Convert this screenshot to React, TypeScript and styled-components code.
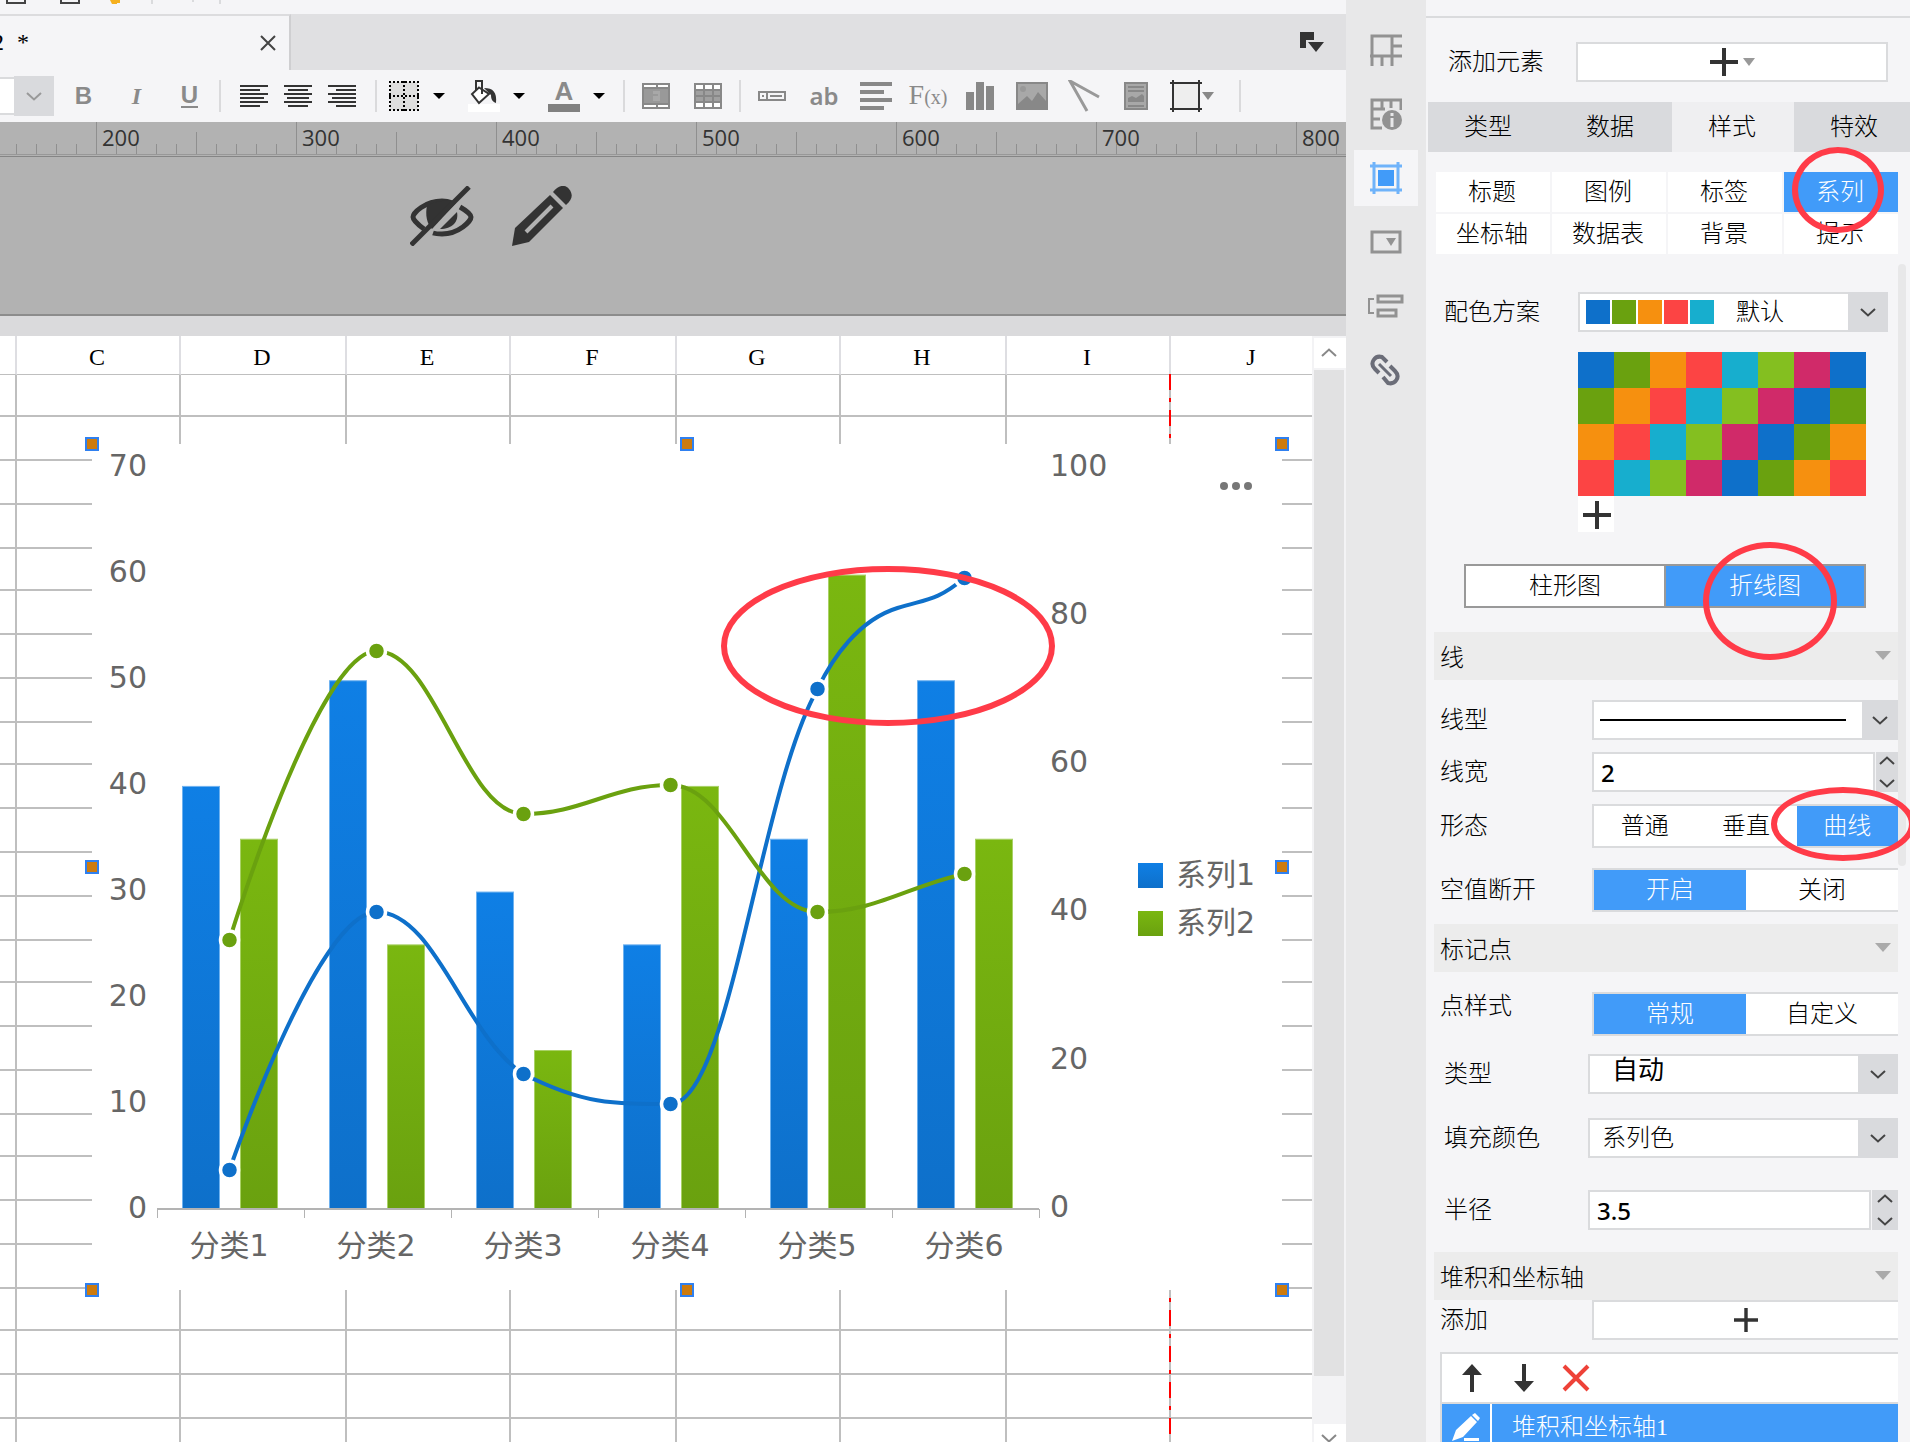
import React from "react";
import styled, { createGlobalStyle } from "styled-components";

const song = '"Liberation Serif", "Noto Sans CJK SC", serif';
const sans = '"DejaVu Sans", "Noto Sans CJK SC", sans-serif';
const line = "#dadbdd";
const blue = "#419bf9";
const mark = "#ff3b48";
const ink = "#333333";

const GlobalStyle = createGlobalStyle`
  * { box-sizing: border-box; }
  body { margin: 0; background: #f5f5f7; font-family: ${song}; font-size: 24px; font-weight: 300; color: #000; }
  button, input, select { font: inherit; color: inherit; margin: 0; padding: 0; border: 0; border-radius: 0; background: none; }
  svg { display: block; flex: none; }
`;

const Shell = styled.div`
  display: grid;
  grid-template-columns: minmax(0, 1fr) 80px 484px;
  height: 100vh;
  overflow: hidden;
`;

/* ---------- editor ---------- */

const Editor = styled.main`
  display: flex;
  flex-direction: column;
  min-width: 0;
  min-height: 0;
`;

const QuickBar = styled.div`
  height: 14px;
  overflow: hidden;
`;

const TabBar = styled.div`
  display: flex;
  align-items: center;
  justify-content: space-between;
  height: 56px;
  padding-right: 22px;
  background: #e0e0e2;
`;

const FileTab = styled.div`
  display: flex;
  align-items: center;
  justify-content: space-between;
  width: 291px;
  height: 56px;
  padding-right: 13px;
  border-top: 2px solid #dcdcde;
  border-right: 2px solid #cfcfd1;
  background: #f5f5f7;
`;

const TabName = styled.span`
  display: flex;
  gap: 13px;
  margin-left: -8px;
  padding-bottom: 2px;
`;

const PlainButton = styled.button`
  display: flex;
  align-items: center;
  justify-content: center;
`;

const Toolbar = styled.div`
  display: flex;
  align-items: center;
  height: 52px;
  overflow: hidden;
`;

const SizeBox = styled.input`
  flex: none;
  width: 14px;
  height: 38px;
  border: solid ${line};
  border-width: 2px 0;
  background: #fff;
`;

const Drop = styled.span<{ $w: number }>`
  display: flex;
  flex: none;
  align-items: center;
  justify-content: center;
  width: ${(p) => p.$w}px;
  height: 40px;
  background: #d9dadd;
`;

const Group = styled.div<{ $left: number; $right: number; $gap?: number }>`
  display: flex;
  flex: none;
  align-items: center;
  gap: ${(p) => p.$gap ?? 0}px;
  height: 32px;
  padding: 0 ${(p) => p.$right}px 0 ${(p) => p.$left}px;
  border-right: 2px solid #dadadc;
`;

const Tool = styled.button<{ $w: number; $gap?: number }>`
  display: flex;
  align-items: center;
  justify-content: center;
  gap: ${(p) => p.$gap ?? 0}px;
  width: ${(p) => p.$w}px;
  height: 32px;
  color: #8a8a8a;
  line-height: 24px;
  white-space: nowrap;
`;

const Letter = styled.span<{ $kind: "bold" | "italic" | "under" | "word" | "fn" }>`
  font-family: ${(p) => (p.$kind === "italic" || p.$kind === "fn" ? '"Liberation Serif", serif' : p.$kind === "word" ? '"Noto Sans", sans-serif' : '"Liberation Sans", sans-serif')};
  font-size: ${(p) => (p.$kind === "fn" ? 28 : 24)}px;
  font-weight: ${(p) => (p.$kind === "fn" ? 400 : p.$kind === "word" ? 600 : 700)};
  font-style: ${(p) => (p.$kind === "italic" ? "italic" : "normal")};
  border-bottom: ${(p) => (p.$kind === "under" ? "2px solid #8a8a8a" : "0")};
  line-height: 22px;
  small { font-size: 20px; }
`;

const ColorTool = styled.span<{ $bar: string }>`
  display: flex;
  justify-content: center;
  width: 32px;
  height: 32px;
  border-bottom: 8px solid ${(p) => p.$bar};
  font: 700 26px/22px "Liberation Sans", sans-serif;
`;

const Ruler = styled.div`
  height: 35px;
  overflow: hidden;
  border-bottom: 1px solid #858585;
  background: #b2b2b2;
`;

const RulerTrack = styled.div`
  display: flex;
  height: 33px;
  border-bottom: 1px solid #989898;
`;

const RulerUnit = styled.span<{ $lead?: boolean }>`
  flex: none;
  width: ${(p) => (p.$lead ? 96 : 200)}px;
  padding: 2px 0 0 5px;
  border-left: ${(p) => (p.$lead ? 0 : 1)}px solid #8f8f8f;
  background:
    linear-gradient(#8f8f8f, #8f8f8f) ${(p) => (p.$lead ? -4 : 99)}px 10px / 1px 24px no-repeat,
    repeating-linear-gradient(to left, transparent 0 19px, #8f8f8f 19px 20px) right 22px / 199px 12px no-repeat;
  color: ${ink};
  font: 500 22px/26px "Open Sans", sans-serif;
`;

const HeaderBand = styled.div`
  display: flex;
  gap: 38px;
  height: 159px;
  padding: 29px 0 0 410px;
  border-bottom: 2px solid #8c8c8c;
  background: #b2b2b2;
`;

const Divider = styled.div`
  height: 20px;
  background: #dadadc;
`;

const SheetArea = styled.div`
  display: flex;
  flex: 1;
  min-height: 0;
`;

const SheetView = styled.div`
  position: relative;
  flex: 1;
  min-width: 0;
  overflow: hidden;
  background: #fff;
`;

const Sheet = styled.table`
  width: 1335px;
  table-layout: fixed;
  border-collapse: separate;
  border-spacing: 0;
`;

const ColHead = styled.th`
  height: 39px;
  padding: 4px 2px 0 0;
  border-right: 2px solid #dedee2;
  border-bottom: 1px solid #bfbfbf;
  font: 400 24px/28px ${song};
`;

const Cell = styled.td<{ $h: number }>`
  height: ${(p) => p.$h}px;
  padding: 0;
  border-right: 2px solid #bfbfbf;
  border-bottom: 2px solid #bfbfbf;
`;

const PageBreak = styled.div`
  position: absolute;
  top: 38px;
  bottom: 0;
  left: 1169px;
  width: 2px;
  background: repeating-linear-gradient(#f00 0 16px, transparent 16px 24px, #f00 24px 28px, transparent 28px 36px);
`;

const ChartFrame = styled.div`
  position: absolute;
  top: 108px;
  left: 92px;
  background: #fff;
`;

const Handle = styled.span<{ $x: number; $y: number }>`
  position: absolute;
  left: ${(p) => p.$x}%;
  top: ${(p) => p.$y}%;
  width: 14px;
  height: 14px;
  margin: -7px;
  border: 2px solid #2f80f0;
  background: #cd7b0e;
`;

const ScrollRail = styled.div`
  display: flex;
  flex-direction: column;
  gap: 2px;
  width: 34px;
  padding: 2px 0 0 2px;
  background: #f3f3f5;
`;

const ScrollButton = styled.button<{ $h: number }>`
  display: flex;
  align-items: flex-start;
  justify-content: center;
  flex: none;
  height: ${(p) => p.$h}px;
  padding: 10px 2px 0 0;
  background: #fff;
`;

const ScrollThumb = styled.div`
  flex: 1;
  margin: 0 2px 46px 0;
  background: #e1e1e2;
`;

/* ---------- side rail ---------- */

const SideRail = styled.nav`
  display: flex;
  flex-direction: column;
  align-items: center;
  gap: 8px;
  padding-top: 22px;
  background: #e8e8e9;
`;

const RailButton = styled.button<{ $active?: boolean }>`
  display: flex;
  align-items: center;
  justify-content: center;
  width: 64px;
  height: 56px;
  background: ${(p) => (p.$active ? "#f5f5f7" : "transparent")};
`;

/* ---------- property panel ---------- */

const Panel = styled.aside`
  display: flex;
  flex-direction: column;
  min-height: 0;
  padding-top: 16px;
`;

const AddRow = styled.div`
  display: flex;
  align-items: center;
  justify-content: space-between;
  height: 86px;
  padding: 3px 22px 0;
  border-top: 2px solid ${line};
  label { padding-bottom: 4px; }
`;

const AddButton = styled.button`
  display: flex;
  align-items: center;
  justify-content: center;
  gap: 5px;
  width: 312px;
  height: 40px;
  border: 2px solid ${line};
  background: #fff;
`;

const Tabs = styled.div`
  display: flex;
  margin-left: 2px;
  overflow: hidden;
`;

const Tab = styled.button<{ $active?: boolean }>`
  flex: none;
  width: 122px;
  height: 50px;
  padding: 0 2px 6px 0;
  background: ${(p) => (p.$active ? "#efeff1" : "#d9dadd")};
`;

const SubTabs = styled.div`
  display: grid;
  grid-template-columns: repeat(4, 1fr);
  gap: 2px;
  margin: 20px 12px 10px 10px;
`;

const SubTab = styled.button<{ $active?: boolean }>`
  position: relative;
  height: 40px;
  padding: 0 2px 5px 0;
  background: ${(p) => (p.$active ? blue : "#fff")};
  color: ${(p) => (p.$active ? "#fff" : "#000")};
`;

const Ring = styled.span<{ $w: number; $h: number; $x: number; $y: number }>`
  position: absolute;
  z-index: 2;
  left: ${(p) => p.$x}px;
  top: ${(p) => p.$y}px;
  width: ${(p) => p.$w}px;
  height: ${(p) => p.$h}px;
  border: 6px solid ${mark};
  border-radius: 50%;
  pointer-events: none;
`;

const Scroller = styled.div`
  display: flex;
  flex: 1;
  min-height: 0;
`;

const Form = styled.div`
  flex: 1;
  min-width: 0;
  padding: 28px 0 0 8px;
`;

const PanelThumb = styled.div`
  flex: none;
  width: 8px;
  height: 602px;
  margin-right: 4px;
  border-radius: 4px;
  background: #e8e8e9;
`;

const Field = styled.div<{ $inset?: boolean; $after: number; $top?: boolean }>`
  display: flex;
  align-items: ${(p) => (p.$top ? "flex-start" : "center")};
  margin-bottom: ${(p) => p.$after}px;
  padding-left: ${(p) => (p.$inset ? 10 : 6)}px;
  line-height: 28px;
  & > :first-child { flex: none; width: ${(p) => (p.$inset ? 144 : 152)}px; }
`;

const SchemeField = styled(Field)`
  padding-right: 10px;
  & > :first-child { width: 134px; }
`;

const Combo = styled.div`
  display: flex;
  flex: 1;
  height: 40px;
  background: #fff;
  box-shadow: inset 0 0 0 2px ${line};
`;

const Select = styled.select<{ $pad: number; $big?: boolean; $rule?: boolean }>`
  appearance: none;
  flex: 1;
  min-width: 0;
  padding-left: ${(p) => p.$pad}px;
  padding-bottom: ${(p) => (p.$big ? 8 : 0)}px;
  font-family: ${(p) => (p.$big ? sans : song)};
  font-size: ${(p) => (p.$big ? 26 : 24)}px;
  font-weight: ${(p) => (p.$big ? 400 : 300)};
  background: ${(p) => (p.$rule ? "linear-gradient(#000, #000) 8px 19px / calc(100% - 24px) 2px no-repeat" : "none")};
`;

const Swatches = styled.span`
  display: flex;
  gap: 2px;
  padding: 8px 0 0 8px;
`;

const Swatch = styled.span<{ $c: string; $s: number }>`
  width: ${(p) => p.$s}px;
  height: ${(p) => p.$s}px;
  background: ${(p) => p.$c};
`;

const Palette = styled.div`
  display: grid;
  grid-template-columns: repeat(8, 36px);
  margin: 0 0 32px 144px;
`;

const PaletteAdd = styled.button`
  display: flex;
  align-items: center;
  justify-content: center;
  width: 36px;
  height: 36px;
  padding: 2px 0 0 2px;
  background: #fff;
`;

const KindSwitch = styled.div`
  display: grid;
  grid-template-columns: 1fr 1fr;
  gap: 2px;
  height: 44px;
  margin: 0 32px 24px 30px;
  padding: 2px;
  background: #999;
  button { padding-bottom: 5px; }
`;

const Section = styled.button<{ $after: number }>`
  display: flex;
  align-items: center;
  justify-content: space-between;
  width: 100%;
  height: 48px;
  margin-bottom: ${(p) => p.$after}px;
  padding: 0 7px 1px 6px;
  background: #ececec;
  text-align: left;
`;

const Segments = styled.div`
  display: flex;
  flex: 1;
  height: 44px;
  border: solid ${line};
  border-width: 2px 0 2px 2px;
  background: #fff;
`;

const Segment = styled.button<{ $active?: boolean }>`
  position: relative;
  flex: 1;
  background: ${(p) => (p.$active ? blue : "#fff")};
  color: ${(p) => (p.$active ? "#fff" : "#000")};
`;

const NumberBox = styled.input`
  flex: 1;
  min-width: 0;
  height: 40px;
  padding-left: 7px;
  border: 2px solid ${line};
  background: #fff;
  font: 500 24px/28px "Noto Sans", sans-serif;
`;

const Stepper = styled.span<{ $w: number }>`
  display: flex;
  flex-direction: column;
  align-items: center;
  justify-content: space-between;
  width: ${(p) => p.$w}px;
  height: 40px;
  margin-left: 1px;
  padding: 4px 0;
  background: #d9dadd;
`;

const WideAdd = styled.button`
  display: flex;
  align-items: center;
  justify-content: center;
  flex: 1;
  height: 40px;
  border: solid ${line};
  border-width: 2px 0 2px 2px;
  background: #fff;
`;

const StackList = styled.div`
  margin-left: 6px;
  border: solid ${line};
  border-width: 2px 0 0 2px;
  background: #fff;
`;

const StackTools = styled.div`
  display: flex;
  align-items: center;
  gap: 24px;
  height: 50px;
  padding-left: 16px;
  border-bottom: 2px solid ${line};
`;

const StackRow = styled.div`
  display: flex;
  gap: 2px;
  height: 46px;
`;

const StackEdit = styled.button`
  display: flex;
  align-items: center;
  justify-content: center;
  width: 48px;
  background: ${blue};
`;

const StackName = styled.span`
  flex: 1;
  padding-left: 20px;
  background: ${blue};
  color: #fff;
  line-height: 46px;
`;

/* ---------- icons ---------- */

const Chevron = ({ up, color = "#444" }: { up?: boolean; color?: string }) => (
  <svg width="16" height="9" viewBox="0 0 16 9" fill="none" stroke={color} strokeWidth="2">
    <path d={up ? "M1 8 8 1.5 15 8" : "M1 1 8 7.5 15 1"} />
  </svg>
);

const Caret = ({ w = 12, h = 6, color = "#000" }: { w?: number; h?: number; color?: string }) => (
  <svg width={w} height={h} viewBox="0 0 12 6" preserveAspectRatio="none" fill={color}><path d="M0 0h12L6 6z" /></svg>
);

const Plus = ({ size = 28 }: { size?: number }) => (
  <svg width={size} height={size} viewBox="0 0 28 28" stroke={ink} strokeWidth="4"><path d="M14 0v28M0 14h28" /></svg>
);

const AlignIcon = ({ rows }: { rows: number[][] }) => (
  <svg width="28" height="22" viewBox="0 0 28 22" stroke={ink} strokeWidth="2">
    {rows.map(([a, b], i) => <path key={i} d={`M${a} ${1 + i * 4}H${b}`} />)}
  </svg>
);

const BorderIcon = () => (
  <svg width="32" height="32" viewBox="0 0 32 32">
    <path d="M2 2h28v28H2z" fill="#dedede" />
    <path d="M2 1v30M16 1v30M30 1v30M1 2h30M1 16h30M1 30h30" stroke="#000" strokeWidth="2" strokeDasharray="2 2" />
  </svg>
);

const BucketIcon = () => (
  <svg width="32" height="32" viewBox="0 0 32 32" fill="none" stroke={ink} strokeWidth="2">
    <path d="M0 24h32v8H0z" fill="#fff" stroke="none" />
    <path d="M11 7.500 21 14 11 23 4 14z" fill="#fff" />
    <path d="M8 10V1h6v13" />
    <path d="M16 8c9 0 13 4 12 15-3-1-5-3-5-8z" fill={ink} stroke="none" />
  </svg>
);

const CellsIcon = ({ dense }: { dense?: boolean }) => (
  <svg width="28" height="26" viewBox="0 0 28 26">
    <path d="M0 0h28v26H0z" fill="#888" />
    {dense ? (
      <>
        <path d="M2 2h7v4H2zM11 2h7v4h-7zM20 2h6v4h-6zM2 20h7v4H2zM11 20h7v4h-7zM20 20h6v4h-6z" fill="#fff" />
        <path d="M2 8h7v4H2zM11 8h7v4h-7zM20 8h6v4h-6zM2 14h7v4H2zM11 14h7v4h-7zM20 14h6v4h-6z" fill="#a0a0a0" />
      </>
    ) : (
      <>
        <path d="M2 2h12v2H2zM16 2h10v2H16zM2 22h12v2H2zM16 22h10v2H16z" fill="#fff" />
        <path d="M2 6h24v14H2z" fill="#999" />
        <path d="M11 8h7v10h-7v-5h5v-2h-5z" fill="#a8a8a8" />
      </>
    )}
  </svg>
);

const FieldIcon = () => (
  <svg width="28" height="10" viewBox="0 0 28 10" fill="none" stroke="#888" strokeWidth="2"><path d="M1 1h26v8H1zM9 1v8M4 5h2M12 5h12" /></svg>
);
const ParagraphIcon = () => (
  <svg width="32" height="28" viewBox="0 0 32 28" stroke="#888" strokeWidth="4"><path d="M0 2h32M0 10h24M0 18h32M0 26h24" /></svg>
);
const BarsIcon = () => (
  <svg width="28" height="28" viewBox="0 0 28 28" fill="#888"><path d="M0 10h8v18H0zM10 0h8v28h-8zM20 4h8v24h-8z" /></svg>
);
const ImageIcon = () => (
  <svg width="32" height="28" viewBox="0 0 32 28">
    <path d="M1 1h30v26H1z" fill="#a8a8a8" stroke="#888" strokeWidth="2" />
    <path d="M2 22 11 14l5 5 6-9 8 9v8H2z" fill="#888" /><circle cx="7" cy="7" r="3" fill="#999" />
  </svg>
);
const SlantIcon = () => (
  <svg width="32" height="32" viewBox="0 0 32 32" fill="none" stroke="#999" strokeWidth="3"><path d="M19 31 2 1l29 16" /></svg>
);
const ReportIcon = () => (
  <svg width="24" height="28" viewBox="0 0 24 28">
    <path d="M1 1h22v26H1z" fill="#a8a8a8" stroke="#888" strokeWidth="2" />
    <path d="M4 5h16M4 9h16M4 24h16" stroke="#888" strokeWidth="2" /><path d="M4 20v-4l4-2 4 2 6-4 2 2v6z" fill="#888" />
  </svg>
);
const FrameIcon = () => (
  <svg width="32" height="32" viewBox="0 0 32 32" stroke={ink} strokeWidth="2"><path d="M3 3h26v26H3z" fill="#eee" stroke="none" /><path d="M0 3h32M0 29h32M3 0v32M29 0v32" /></svg>
);

const EyeOffIcon = () => (
  <svg width="64" height="60" viewBox="0 0 64 60" fill="none" stroke={ink} strokeWidth="5">
    <path d="M14 43C7 38 3 33 3 31c0-4 12-16 29-16 4 0 8 1 11 2" />
    <path d="M50 21c7 4 11 8 11 10 0 4-12 17-29 17-4 0-6 0-9-1" />
    <path d="M17 20c3-4 24-8 29-3L22 43c-5-5-7-14-5-23z" fill={ink} stroke="none" />
    <path d="M47 26c2 10-5 17-17 17z" fill={ink} stroke="none" />
    <path d="M1 59 59 1" strokeWidth="5" />
  </svg>
);
const PencilIcon = () => (
  <svg width="60" height="60" viewBox="0 0 60 60">
    <path d="M0 60 3 42 38 9 51 22 17 56z" fill={ink} />
    <path d="M14 46 40 20" stroke="#b2b2b2" strokeWidth="4" />
    <path d="M41 6C46-1 53-2 57 3s4 10-3 16z" fill={ink} />
  </svg>
);

const FlagIcon = () => (
  <svg width="24" height="20" viewBox="0 0 24 20" fill={ink}><path d="M0 0h14v8H6v8H0zM8 10h16l-8 10z" /></svg>
);

const CellAttrIcon = () => (
  <svg width="32" height="32" viewBox="0 0 32 32" fill="none" stroke="#929292" strokeWidth="3"><path d="M32 2H2v30M22 2v30M0 22h32M22 12h10M12 22v10" /></svg>
);
const CellInfoIcon = () => (
  <svg width="32" height="32" viewBox="0 0 32 32" fill="none" stroke="#929292" strokeWidth="3">
    <path d="M31 12V2H2v28h10M2 11h13M12 2v10M21 2v8M2 21h8" />
    <circle cx="22" cy="22" r="10" fill="#929292" stroke="none" /><path d="M22 15v3M22 20v9" stroke="#e8e8e9" />
  </svg>
);
const WidgetIcon = () => (
  <svg width="32" height="32" viewBox="0 0 32 32" fill="none" stroke="#6fb3fa" strokeWidth="3">
    <path d="M0 4h32M0 28h32M4 0v32M28 0v32" /><path d="M8 8h16v16H8z" fill={blue} stroke="none" />
  </svg>
);
const ComboIcon = () => (
  <svg width="32" height="24" viewBox="0 0 32 24" fill="none" stroke="#929292" strokeWidth="3"><path d="M2 2h28v20H2z" /><path d="M16 8h10l-5 8z" fill="#929292" stroke="none" /></svg>
);
const TreeIcon = () => (
  <svg width="36" height="24" viewBox="0 0 36 24" fill="none" stroke="#929292" strokeWidth="3"><path d="M10 2h24v6H10zM10 16h18v6H10z" /><path d="M6 5H1v14h5" strokeWidth="2" /></svg>
);
const LinkIcon = () => (
  <svg width="32" height="32" viewBox="0 0 32 32" fill="none" stroke="#6b6d78" strokeWidth="4">
    <path d="M9 19 5 15C-1 9 5 1 12 3l5 5" /><path d="M9 10 21 22" strokeWidth="3" /><path d="M20 12l5 5c6 6 0 14-7 12l-5-6" />
  </svg>
);

/* ---------- chart ---------- */

const bars1 = [40, 50, 30, 25, 35, 50];
const bars2 = [35, 25, 15, 40, 60, 35];
const dots1 = [1170, 912, 1074, 1104, 689, 578];
const dots2 = [940, 651, 814, 785, 912, 874];
const base = 1209;
const step = 147;

const Chart = () => {
  const x = (i: number) => 229 + i * step;
  const bar = (v: number, i: number, off: number, fill: string, edge: string) => {
    const top = base - v * 10.565;
    return <rect key={`${off}-${i}`} x={182.5 + off + i * step} y={top} width="37" height={base - top} fill={`url(#${fill})`} stroke={edge} />;
  };
  return (
    <svg width="1190" height="846" viewBox="92 444 1190 846" fontFamily={sans} fontSize="30" fontWeight="400" fill="#666">
      <defs>
        <linearGradient id="g1" x1="0" y1="0" x2="0" y2="1"><stop offset="0" stopColor="#0f7fe5" /><stop offset="1" stopColor="#0e70ca" /></linearGradient>
        <linearGradient id="g2" x1="0" y1="0" x2="0" y2="1"><stop offset="0" stopColor="#7ab710" /><stop offset="1" stopColor="#6aa10f" /></linearGradient>
      </defs>
      {[70, 60, 50, 40, 30, 20, 10, 0].map((v, i) => <text key={v} x="147" y={476 + i * 106} textAnchor="end">{v}</text>)}
      {[100, 80, 60, 40, 20, 0].map((v, i) => <text key={v} x="1050" y={Math.floor(476 + i * 148.3)}>{v}</text>)}
      {bars1.map((v, i) => bar(v, i, 0, "g1", "#6fb2ef"))}
      {bars2.map((v, i) => bar(v, i, 58, "g2", "#a9d166"))}
      <path d="M157 1209H1039" stroke="#b3b3b3" strokeWidth="2" />
      {[0, 1, 2, 3, 4, 5, 6].map((i) => <path key={i} d={`M${157.5 + i * step} 1209v9`} stroke="#b3b3b3" />)}
      {[1, 2, 3, 4, 5, 6].map((n, i) => <text key={n} x={x(i)} y="1256" textAnchor="middle">{`分类${n}`}</text>)}
      <g transform="translate(0.500 0)">
        <g fill="none" strokeWidth="4">
          <path stroke="#0e70ca" d="M229 1170C229 1170 317 912 376 912 435 912 464 1036 523 1074 582 1104 611 1104 670 1104 729 1104 758 794 817 689 832 658 858 620 897 608 925 599 935 602 964 578" />
          <path stroke="#6aa10f" d="M229 940C229 940 317 651 376 651 435 651 464 814 523 814 582 814 611 785 670 785 729 785 758 912 817 912 876 912 910 885 964 874" />
        </g>
        {dots1.map((y, i) => <circle key={i} cx={x(i)} cy={y} r="9" fill="#0e70ca" stroke="#fff" strokeWidth="3.500" />)}
        {dots2.map((y, i) => <circle key={i} cx={x(i)} cy={y} r="9" fill="#6aa10f" stroke="#fff" strokeWidth="3.500" />)}
      </g>
      <rect x="1138" y="863" width="25" height="25" fill="url(#g1)" />
      <text x="1176" y="885">系列1</text>
      <rect x="1138" y="911" width="25" height="25" fill="url(#g2)" />
      <text x="1176" y="933">系列2</text>
      {[1224, 1236, 1248].map((cx) => <circle key={cx} cx={cx} cy="486" r="4" fill="#777" />)}
      <ellipse cx="888" cy="646" rx="164" ry="77" fill="none" stroke={mark} strokeWidth="6" />
    </svg>
  );
};

const colors = ["#0e70ca", "#6aa10f", "#f6900f", "#fc4444", "#17aece", "#84bf20", "#d02a69"];
const rowHeights = [42, 44, 44, 44, 42, 44, 44, 44, 42, 44, 44, 44, 44, 42, 44, 44, 44, 42, 44, 44, 44, 42, 44, 44, 44];
const cols = ["", "C", "D", "E", "F", "G", "H", "I", "J"];
const colWidths = [17, 164, 166, 164, 166, 164, 166, 164, 164];
const handles = [[0, 0], [50, 0], [100, 0], [0, 50], [100, 50], [0, 100], [50, 100], [100, 100]];

export default function App() {
  return (
    <Shell>
      <GlobalStyle />
      <Editor>
        <QuickBar>
          <svg width="240" height="4" viewBox="0 0 240 4" fill="none">
            <path d="M7 0v3h18V0M61 0v3h18V0" stroke="#444" strokeWidth="2" />
            <path d="M110 0h10v3h-3v1h-5z" fill="#f5b01e" />
            <path d="M152 0v4M193 0v2M220 0v4" stroke={line} strokeWidth="2" />
          </svg>
        </QuickBar>
        <TabBar>
          <FileTab>
            <TabName><span>2</span><span>*</span></TabName>
            <PlainButton aria-label="关闭">
              <svg width="16" height="16" viewBox="0 0 16 16" stroke="#444" strokeWidth="2"><path d="M1 1 15 15M15 1 1 15" /></svg>
            </PlainButton>
          </FileTab>
          <PlainButton aria-label="窗口"><FlagIcon /></PlainButton>
        </TabBar>

        <Toolbar>
          <SizeBox aria-label="字号" />
          <Drop $w={40}><Chevron color="#999" /></Drop>
          <Group $left={3} $right={3}>
            <Tool $w={53}><Letter $kind="bold">B</Letter></Tool>
            <Tool $w={53}><Letter $kind="italic">I</Letter></Tool>
            <Tool $w={53}><Letter $kind="under">U</Letter></Tool>
          </Group>
          <Group $left={11} $right={11}>
            <Tool $w={44} aria-label="左对齐"><AlignIcon rows={[[0, 28], [0, 20], [0, 28], [0, 24], [0, 28], [0, 20]]} /></Tool>
            <Tool $w={44} aria-label="居中"><AlignIcon rows={[[0, 28], [4, 24], [0, 28], [3, 25], [0, 28], [4, 24]]} /></Tool>
            <Tool $w={44} aria-label="右对齐"><AlignIcon rows={[[0, 28], [8, 28], [0, 28], [4, 28], [0, 28], [8, 28]]} /></Tool>
          </Group>
          <Group $left={11} $right={18} $gap={23}>
            <Tool $w={57} $gap={13} aria-label="边框"><BorderIcon /><Caret /></Tool>
            <Tool $w={57} $gap={13} aria-label="填充"><BucketIcon /><Caret /></Tool>
            <Tool $w={57} $gap={13}><ColorTool $bar="#808080">A</ColorTool><Caret /></Tool>
          </Group>
          <Group $left={5} $right={5}>
            <Tool $w={52} aria-label="合并"><CellsIcon /></Tool>
            <Tool $w={52} aria-label="拆分"><CellsIcon dense /></Tool>
          </Group>
          <Group $left={5} $right={17}>
            <Tool $w={52} aria-label="数据列"><FieldIcon /></Tool>
            <Tool $w={52}><Letter $kind="word">ab</Letter></Tool>
            <Tool $w={52} aria-label="富文本"><ParagraphIcon /></Tool>
            <Tool $w={52}><Letter $kind="fn">F<small>(x)</small></Letter></Tool>
            <Tool $w={52} aria-label="图表"><BarsIcon /></Tool>
            <Tool $w={52} aria-label="图片"><ImageIcon /></Tool>
            <Tool $w={52} aria-label="斜线"><SlantIcon /></Tool>
            <Tool $w={52} aria-label="子报表"><ReportIcon /></Tool>
            <Tool $w={60} aria-label="控件"><FrameIcon /><Caret h={8} color="#888" /></Tool>
          </Group>
        </Toolbar>

        <Ruler>
          <RulerTrack>
            <RulerUnit $lead />
            {[200, 300, 400, 500, 600, 700, 800].map((n) => <RulerUnit key={n}>{n}</RulerUnit>)}
          </RulerTrack>
        </Ruler>
        <HeaderBand><EyeOffIcon /><PencilIcon /></HeaderBand>
        <Divider />

        <SheetArea>
          <SheetView>
            <Sheet>
              <colgroup>{colWidths.map((w, i) => <col key={i} style={{ width: w }} />)}</colgroup>
              <thead><tr>{cols.map((c, i) => <ColHead key={i}>{c}</ColHead>)}</tr></thead>
              <tbody>
                {rowHeights.map((h, r) => <tr key={r}>{cols.map((_, i) => <Cell key={i} $h={h} />)}</tr>)}
              </tbody>
            </Sheet>
            <PageBreak />
            <ChartFrame>
              <Chart />
              {handles.map(([hx, hy]) => <Handle key={`${hx}-${hy}`} $x={hx} $y={hy} />)}
            </ChartFrame>
          </SheetView>
          <ScrollRail>
            <ScrollButton $h={30} aria-label="向上"><Chevron up color="#888" /></ScrollButton>
            <ScrollThumb />
            <ScrollButton $h={18} aria-label="向下"><Chevron color="#888" /></ScrollButton>
          </ScrollRail>
        </SheetArea>
      </Editor>

      <SideRail>
        <RailButton aria-label="单元格元素"><CellAttrIcon /></RailButton>
        <RailButton aria-label="单元格属性"><CellInfoIcon /></RailButton>
        <RailButton $active aria-label="悬浮元素"><WidgetIcon /></RailButton>
        <RailButton aria-label="控件设置"><ComboIcon /></RailButton>
        <RailButton aria-label="条件属性"><TreeIcon /></RailButton>
        <RailButton aria-label="超级链接"><LinkIcon /></RailButton>
      </SideRail>

      <Panel>
        <AddRow>
          <label htmlFor="add-element">添加元素</label>
          <AddButton id="add-element"><Plus /><Caret h={8} color="#999" /></AddButton>
        </AddRow>
        <Tabs>
          <Tab>类型</Tab><Tab>数据</Tab><Tab $active>样式</Tab><Tab>特效</Tab>
        </Tabs>
        <SubTabs>
          <SubTab>标题</SubTab><SubTab>图例</SubTab><SubTab>标签</SubTab>
          <SubTab $active>系列<Ring $w={92} $h={86} $x={8} $y={-25} /></SubTab>
          <SubTab>坐标轴</SubTab><SubTab>数据表</SubTab><SubTab>背景</SubTab><SubTab>提示</SubTab>
        </SubTabs>

        <Scroller>
          <Form>
            <SchemeField $inset $after={20}>
              <label htmlFor="scheme">配色方案</label>
              <Combo>
                <Swatches>{colors.slice(0, 5).map((c) => <Swatch key={c} $c={c} $s={24} />)}</Swatches>
                <Select id="scheme" $pad={22}><option>默认</option></Select>
                <Drop $w={40}><Chevron /></Drop>
              </Combo>
            </SchemeField>
            <Palette>
              {Array.from({ length: 32 }, (_, i) => (
                <Swatch key={i} $s={36} $c={colors[((i % 8) + Math.floor(i / 8)) % 7]} />
              ))}
              <PaletteAdd aria-label="添加颜色"><Plus /></PaletteAdd>
            </Palette>
            <KindSwitch>
              <Segment>柱形图</Segment>
              <Segment $active>折线图<Ring $w={134} $h={118} $x={37} $y={-24} /></Segment>
            </KindSwitch>

            <Section $after={20}>线<Caret w={16} h={9} color="#aaa" /></Section>
            <Field $after={12}>
              <label htmlFor="line-type">线型</label>
              <Combo>
                <Select id="line-type" $pad={8} $rule><option aria-label="实线" /></Select>
                <Drop $w={36}><Chevron /></Drop>
              </Combo>
            </Field>
            <Field $after={12}>
              <label htmlFor="line-width">线宽</label>
              <NumberBox id="line-width" defaultValue="2" />
              <Stepper $w={22}><Chevron up /><Chevron /></Stepper>
            </Field>
            <Field $after={20}>
              <span id="shape">形态</span>
              <Segments role="group" aria-labelledby="shape">
                <Segment>普通</Segment><Segment>垂直</Segment>
                <Segment $active>曲线<Ring $w={144} $h={74} $x={-26} $y={-19} /></Segment>
              </Segments>
            </Field>
            <Field $after={12}>
              <span id="nulls">空值断开</span>
              <Segments role="group" aria-labelledby="nulls"><Segment $active>开启</Segment><Segment>关闭</Segment></Segments>
            </Field>

            <Section $after={20}>标记点<Caret w={16} h={9} color="#aaa" /></Section>
            <Field $after={18} $top>
              <span id="dot-style">点样式</span>
              <Segments role="group" aria-labelledby="dot-style"><Segment $active>常规</Segment><Segment>自定义</Segment></Segments>
            </Field>
            <Field $inset $after={24}>
              <label htmlFor="dot-type">类型</label>
              <Combo>
                <Select id="dot-type" $pad={24} $big><option>自动</option></Select>
                <Drop $w={40}><Chevron /></Drop>
              </Combo>
            </Field>
            <Field $inset $after={32}>
              <label htmlFor="fill-color">填充颜色</label>
              <Combo>
                <Select id="fill-color" $pad={14}><option>系列色</option></Select>
                <Drop $w={40}><Chevron /></Drop>
              </Combo>
            </Field>
            <Field $inset $after={22}>
              <label htmlFor="radius">半径</label>
              <NumberBox id="radius" defaultValue="3.5" />
              <Stepper $w={26}><Chevron up /><Chevron /></Stepper>
            </Field>

            <Section $after={0}>堆积和坐标轴<Caret w={16} h={9} color="#aaa" /></Section>
            <Field $after={12}>
              <label htmlFor="add-stack">添加</label>
              <WideAdd id="add-stack"><Plus size={24} /></WideAdd>
            </Field>
            <StackList>
              <StackTools>
                <PlainButton aria-label="上移">
                  <svg width="28" height="28" viewBox="0 0 28 28" fill={ink}><path d="M14 0 24 11H16V28H12V11H4z" /></svg>
                </PlainButton>
                <PlainButton aria-label="下移">
                  <svg width="28" height="28" viewBox="0 0 28 28" fill={ink}><path d="M14 28 4 17H12V0H16V17H24z" /></svg>
                </PlainButton>
                <PlainButton aria-label="删除">
                  <svg width="28" height="28" viewBox="0 0 28 28" stroke="#ee4238" strokeWidth="4"><path d="M2 2 26 26M26 2 2 26" /></svg>
                </PlainButton>
              </StackTools>
              <StackRow>
                <StackEdit aria-label="编辑">
                  <svg width="28" height="28" viewBox="0 0 28 28" fill="#fff"><path d="M0 28 4 17 19 3l6 6L11 24zM20 2l3-2 5 5-2 3zM12 25h15v3H12z" /></svg>
                </StackEdit>
                <StackName>堆积和坐标轴1</StackName>
              </StackRow>
            </StackList>
          </Form>
          <PanelThumb />
        </Scroller>
      </Panel>
    </Shell>
  );
}
